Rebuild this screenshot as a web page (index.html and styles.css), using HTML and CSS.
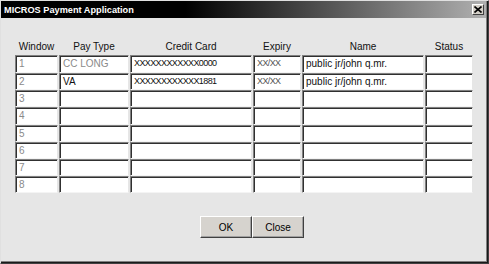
FILE: index.html
```html
<!DOCTYPE html>
<html>
<head>
<meta charset="utf-8">
<link rel="stylesheet" href="styles.css">
</head>
<body>
<div class="window">
  <div class="titlebar">
    <span class="title">MICROS Payment Application</span>
    <span class="close-btn"><svg width="8" height="7" viewBox="0 0 8 7"><path d="M0.5 0.5 L7.5 6.5 M7.5 0.5 L0.5 6.5" stroke="#000" stroke-width="1.6"/></svg></span>
  </div>
  <div class="content">
    <div class="grid">
      <div class="hd">Window</div>
      <div class="hd">Pay Type</div>
      <div class="hd">Credit Card</div>
      <div class="hd">Expiry</div>
      <div class="hd">Name</div>
      <div class="hd">Status</div>

      <div class="cell muted">1</div>
      <div class="cell muted">CC LONG</div>
      <div class="cell tight">XXXXXXXXXXXX0000</div>
      <div class="cell dim tight">XX/XX</div>
      <div class="cell">public jr/john q.mr.</div>
      <div class="cell"></div>

      <div class="cell muted">2</div>
      <div class="cell">VA</div>
      <div class="cell tight">XXXXXXXXXXXX1881</div>
      <div class="cell dim tight">XX/XX</div>
      <div class="cell">public jr/john q.mr.</div>
      <div class="cell"></div>

      <div class="cell muted">3</div><div class="cell"></div><div class="cell"></div><div class="cell"></div><div class="cell"></div><div class="cell"></div>
      <div class="cell muted">4</div><div class="cell"></div><div class="cell"></div><div class="cell"></div><div class="cell"></div><div class="cell"></div>
      <div class="cell muted">5</div><div class="cell"></div><div class="cell"></div><div class="cell"></div><div class="cell"></div><div class="cell"></div>
      <div class="cell muted">6</div><div class="cell"></div><div class="cell"></div><div class="cell"></div><div class="cell"></div><div class="cell"></div>
      <div class="cell muted">7</div><div class="cell"></div><div class="cell"></div><div class="cell"></div><div class="cell"></div><div class="cell"></div>
      <div class="cell muted">8</div><div class="cell"></div><div class="cell"></div><div class="cell"></div><div class="cell"></div><div class="cell"></div>
    </div>
    <div class="buttons">
      <button class="btn">OK</button>
      <button class="btn">Close</button>
    </div>
  </div>
</div>
</body>
</html>
```

FILE: styles.css
```css
html, body {
  margin: 0;
  padding: 0;
  background: #e6e6e6;
}
.window {
  width: 489px;
  height: 264px;
  box-sizing: border-box;
  background: #e6e6e6;
  border-top: 1px solid #e0e0e0;
  border-left: 1px solid #e0e0e0;
  border-right: 1px solid #404040;
  border-bottom: 1px solid #404040;
  box-shadow: inset -1px -1px 0 #1a1a1a, inset -2px -2px 0 #808080;
  font-family: "Liberation Sans", Arial, sans-serif;
  display: flex;
  flex-direction: column;
}
.titlebar {
  height: 17px;
  margin-right: 2px;
  background: linear-gradient(to right, #000 0%, #000 38%, #b0b0b0 100%);
  display: flex;
  align-items: center;
  justify-content: space-between;
  padding: 0 2px 0 3px;
}
.title {
  color: #fff;
  font-weight: bold;
  font-size: 9.2px;
}
.close-btn {
  width: 12px;
  height: 11px;
  box-sizing: border-box;
  background: #d4d0c8;
  border-top: 1px solid #fff;
  border-left: 1px solid #fff;
  border-right: 1px solid #404040;
  border-bottom: 1px solid #404040;
  display: flex;
  align-items: center;
  justify-content: center;
}
.close-btn svg { display: block; }
.content {
  padding: 23px 0 0 14px;
}
.grid {
  display: grid;
  grid-template-columns: 43px 70px 122px 48px 122px 48px;
  grid-template-rows: 14px 18px 17px 17px 18px 17px 17px 17px 17px;
  column-gap: 1px;
  row-gap: 0;
}
.hd {
  font-size: 10px;
  color: #111;
  text-align: center;
  line-height: 12px;
}
.cell {
  box-sizing: border-box;
  background: #fff;
  border-top: 1px solid #808080;
  border-left: 1px solid #808080;
  border-right: 1px solid #e6e6e6;
  border-bottom: 1px solid #f4f4f4;
  box-shadow: inset 1px 1px 0 #303030;
  font-size: 10px;
  color: #111;
  padding: 0 0 0 3px;
  line-height: 15px;
  white-space: nowrap;
  overflow: hidden;
}
.cell.tight { font-size: 9px; letter-spacing: -0.6px; }
.cell.muted { color: #8a8a8a; }
.cell.dim { color: #555; }
.buttons {
  display: flex;
  padding-top: 23px;
  padding-left: 185px;
}
.btn {
  width: 52px;
  height: 22px;
  box-sizing: border-box;
  background: #d6d3ce;
  border-top: 1px solid #fff;
  border-left: 1px solid #fff;
  border-right: 1px solid #404040;
  border-bottom: 1px solid #404040;
  box-shadow: inset -1px -1px 0 #a0a0a0;
  font-family: "Liberation Sans", Arial, sans-serif;
  font-size: 10px;
  color: #000;
  padding: 0;
  margin: 0;
}
```
